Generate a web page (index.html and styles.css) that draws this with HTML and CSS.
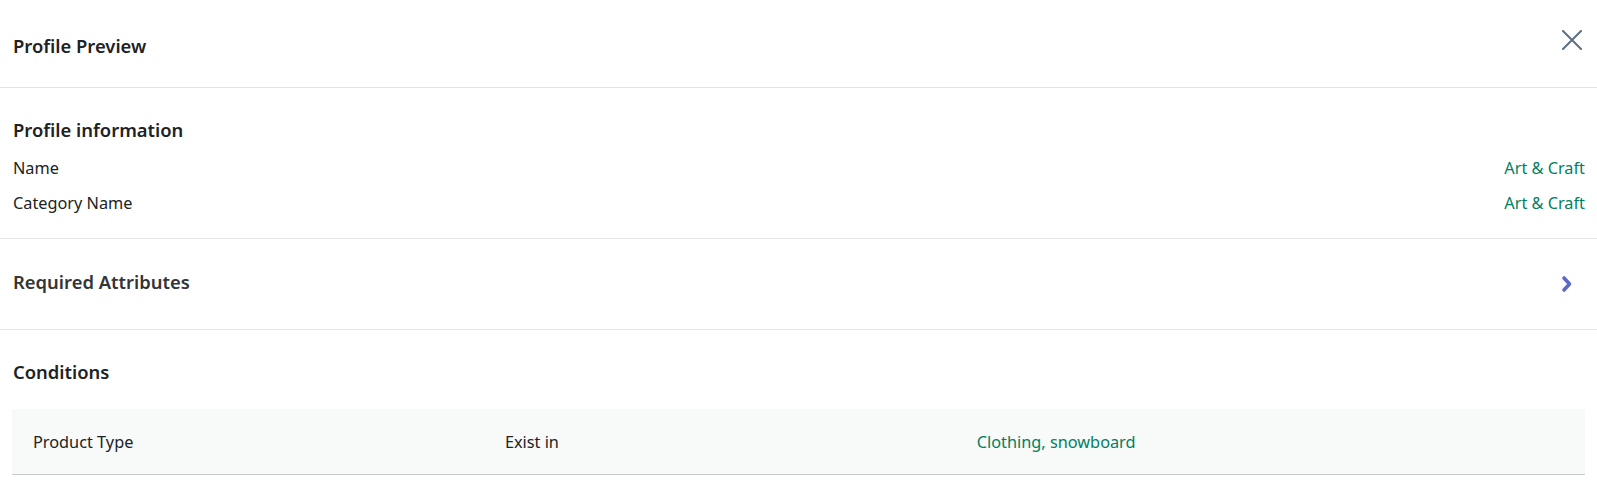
FILE: index.html
```html
<!DOCTYPE html>
<html>
<head>
<meta charset="utf-8">
<link rel="stylesheet" href="styles.css">
</head>
<body>
<div class="panel">
  <header class="header">
    <h1 class="title">Profile Preview</h1>
    <button class="close" aria-label="Close">
      <svg width="20" height="20" viewBox="0 0 20 20"><path d="M1 1L19 19M19 1L1 19" stroke="#5c6f82" stroke-width="2" stroke-linecap="round" fill="none"/></svg>
    </button>
  </header>
  <section class="section info">
    <h2 class="sec-title">Profile information</h2>
    <div class="row"><span>Name</span><span class="value">Art &amp; Craft</span></div>
    <div class="row"><span>Category Name</span><span class="value">Art &amp; Craft</span></div>
  </section>
  <section class="section req">
    <h2 class="sec-title req-title">Required Attributes</h2>
    <svg class="chev" width="12" height="18" viewBox="0 0 12 18"><path d="M3 3L8.5 9L3 15" stroke="#5c6ac4" stroke-width="3.6" fill="none" stroke-linejoin="round" stroke-linecap="round"/></svg>
  </section>
  <section class="section cond">
    <h2 class="sec-title">Conditions</h2>
    <div class="table">
      <div class="cell c1">Product Type</div>
      <div class="cell c2">Exist in</div>
      <div class="cell c3 value">Clothing, snowboard</div>
    </div>
  </section>
</div>
</body>
</html>
```
FILE: styles.css
```css
* { box-sizing: border-box; }
html, body { margin: 0; padding: 0; background: #fff; }
body {
  font-family: "Noto Sans", "Open Sans", "Liberation Sans", sans-serif;
  font-size: 16.3px;
  color: #202223;
}
.panel { width: 100%; }
.header {
  height: 88px;
  border-bottom: 1px solid #e1e3e5;
  display: flex;
  align-items: flex-start;
  justify-content: space-between;
  padding: 34px 13px 0 13px;
}
.title, .sec-title {
  margin: 0;
  font-size: 18.4px;
  font-weight: 600;
  line-height: 24px;
  color: #202223;
}
.close {
  border: 0;
  background: none;
  padding: 0;
  margin-top: -4px;
  margin-right: 2px;
  cursor: pointer;
}
.section {
  border-bottom: 1px solid #e1e3e5;
  padding: 0 12px 0 13px;
}
.info { padding-top: 30px; height: 151px; }
.info .sec-title { margin-bottom: 16px; }
.row {
  display: flex;
  justify-content: space-between;
  line-height: 20px;
  height: 35px;
}
.value { color: #008060; }
.req {
  height: 91px;
  display: flex;
  align-items: center;
  justify-content: space-between;
  padding-bottom: 5px;
}
.req-title { color: #333435; }
.chev { margin-right: 12px; margin-top: 5px; }
.cond { border-bottom: 0; padding-top: 30px; padding-right: 12px; padding-left: 12px; }
.cond .sec-title { margin-left: 1px; margin-bottom: 25px; }
.table {
  display: grid;
  grid-template-columns: 30% 30% 40%;
  background: #f8f9f9;
  border-bottom: 1px solid #c9cccf;
  height: 66px;
  align-items: center;
}
.cell { padding-left: 21px; line-height: 20px; padding-top: 1px; }
```
